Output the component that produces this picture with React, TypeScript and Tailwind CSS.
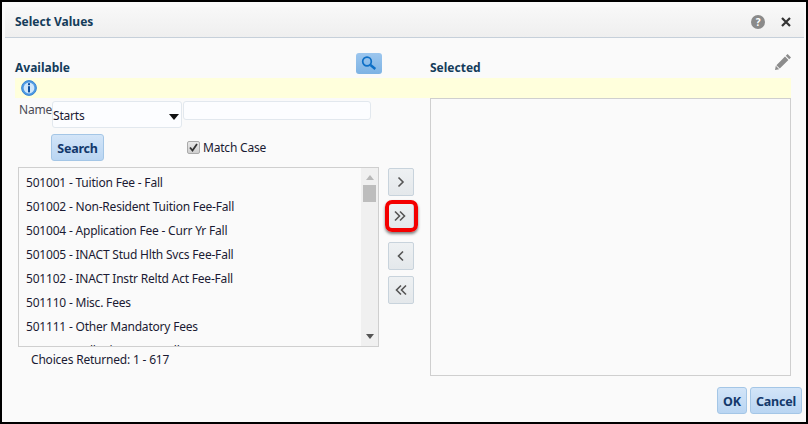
import React from "react";

const items = [
  "501001 - Tuition Fee - Fall",
  "501002 - Non-Resident Tuition Fee-Fall",
  "501004 - Application Fee - Curr Yr Fall",
  "501005 - INACT Stud Hlth Svcs Fee-Fall",
  "501102 - INACT Instr Reltd Act Fee-Fall",
  "501110 - Misc. Fees",
  "501111 - Other Mandatory Fees",
  "501112 - Collegiate Fee - Fall Term",
];

function Chevron({ dir, double }: { dir: "l" | "r"; double?: boolean }) {
  if (dir === "r") {
    return (
      <svg width="18" height="14" viewBox="0 0 18 14" fill="none" stroke="#555" strokeWidth="1.6">
        {double ? (
          <>
            <path d="M3 2.5l4.5 4.5-4.5 4.5" />
            <path d="M8 2.5l4.5 4.5-4.5 4.5" />
          </>
        ) : (
          <path d="M6.5 2.5l4.5 4.5-4.5 4.5" />
        )}
      </svg>
    );
  }
  return (
    <svg width="18" height="14" viewBox="0 0 18 14" fill="none" stroke="#555" strokeWidth="1.6">
      {double ? (
        <>
          <path d="M9 2.5l-4.5 4.5 4.5 4.5" />
          <path d="M14 2.5l-4.5 4.5 4.5 4.5" />
        </>
      ) : (
        <path d="M11 2.5l-4.5 4.5 4.5 4.5" />
      )}
    </svg>
  );
}

function Move({ children }: { children: React.ReactNode }) {
  return (
    <button className="w-[26px] h-[28px] flex items-center justify-center rounded-[2px] border border-[#c8d3dc] bg-gradient-to-b from-[#eef1f3] to-[#e4e8eb]">
      {children}
    </button>
  );
}

function BlueBtn({ label, w }: { label: string; w: string }) {
  return (
    <button className={`${w} h-[27px] pt-[2px] flex items-center justify-center rounded-[3px] border border-[#a4c6e6] bg-gradient-to-b from-[#d3e5f8] to-[#b9d5f2] font-bold text-[12.5px] text-[#13386b]`}>
      {label}
    </button>
  );
}

export default function App() {
  return (
    <div className="font-['Noto_Sans','DejaVu_Sans',sans-serif] w-[808px] h-[424px] bg-black p-[2px] text-[12px] leading-[16px] tracking-[-0.2px] text-[#1a1a33]">
      <div className="w-full h-full bg-[#fafafa] flex flex-col pt-[5px]">
        <div className="h-[31px] shrink-0 ml-[3px] mr-[2px] flex items-center justify-between bg-gradient-to-b from-[#f8f8f8] to-[#efefef] border-b border-[#c6d0da] pl-[10px] pr-[13px]">
          <span className="font-bold text-[12px] tracking-normal text-[#143c5a]">Select Values</span>
          <div className="flex items-center gap-[16px]">
            <span className="w-[14px] h-[14px] rounded-full bg-[#8a8a8a] text-white text-[10px] font-bold flex items-center justify-center">?</span>
            <svg width="10" height="10" viewBox="0 0 10 10" stroke="#333" strokeWidth="2.2"><path d="M1 1l8 8M9 1l-8 8" /></svg>
          </div>
        </div>

        <div className="pl-[13px] pr-[15px]">
          <div className="h-[40px] flex items-start">
            <span className="w-[341px] mt-[22px] font-bold text-[12px] tracking-normal text-[#143c5a]">Available</span>
            <button className="w-[26px] h-[21px] mt-[15px] flex items-center justify-center rounded-[3px] bg-gradient-to-b from-[#9cc6ee] to-[#7db3e4]">
              <svg width="16" height="15" viewBox="0 0 16 15" fill="none" stroke="#0d6fc6"><circle cx="6" cy="5.5" r="4.3" strokeWidth="1.7" /><path d="M9.5 9l4.8 4" strokeWidth="2.4" /></svg>
            </button>
            <span className="ml-[48px] mt-[22px] font-bold text-[12px] tracking-normal text-[#143c5a]">Selected</span>
            <svg className="ml-auto mt-[16px]" width="16" height="16" viewBox="0 0 16 16" fill="#8c8c8c">
              <path d="M12.6 0l3.4 3.4-1.8 1.8-3.4-3.4zM10 2.6l3.4 3.4-8.6 8.6-3.4-3.4zM0.8 11.8l3.4 3.4-4.2 0.8z" />
            </svg>
          </div>

          <div className="h-[20px] bg-[#ffffdc] flex items-center pl-[6px]">
            <svg width="16" height="16" viewBox="0 0 16 16">
              <circle cx="8" cy="8" r="7.4" fill="#4f9be4" stroke="#3a86d2" strokeWidth="1" />
              <circle cx="8" cy="8" r="5.4" fill="#cfe6fb" />
              <rect x="7" y="3.2" width="2" height="2" fill="#0f4f9e" />
              <rect x="7" y="6.2" width="2" height="6.2" fill="#0f4f9e" />
            </svg>
          </div>

          <div className="flex items-start">
            <div className="w-[373px] shrink-0 flex flex-col">
              <div className="flex items-start pt-[3px]">
                <span className="w-[33px] ml-[4px] mt-[1px] text-[#4a4a55]">Name</span>
                <div className="w-[130px] h-[27px] relative flex items-center pt-[3px] rounded-[3px] border border-[#e2e8ee] bg-[#fcfdff]">
                  Starts
                  <svg className="absolute left-[116px] top-[12px]" width="10" height="6" viewBox="0 0 10 6" fill="#111"><path d="M0 0h10L5 6z" /></svg>
                </div>
                <div className="w-[188px] h-[19px] ml-[1px] rounded-[3px] border border-[#e2e8ee] bg-[#fcfdff]" />
              </div>
              <div className="flex items-center mt-[6px] ml-[36px]">
                <BlueBtn label="Search" w="w-[53px]" />
                <span className="w-[13px] h-[13px] ml-[83px] flex items-center justify-center rounded-[2px] border border-[#aaa] bg-gradient-to-b from-[#e8e8e8] to-[#cfcfcf]">
                  <svg width="9" height="9" viewBox="0 0 9 9" fill="none" stroke="#333" strokeWidth="1.8"><path d="M1 4.5l2.5 3L8 1" /></svg>
                </span>
                <span className="ml-[3px]">Match Case</span>
              </div>
              <div className="w-[361px] h-[180px] ml-[3px] mt-[6px] flex border border-[#cfcfcf] bg-[#fafafa] overflow-hidden">
                <div className="flex-1 overflow-hidden pl-[7px] pt-[3px]">
                  {items.map((t) => (
                    <div key={t} className="h-[24px] flex items-center whitespace-nowrap">{t}</div>
                  ))}
                </div>
                <div className="w-[17px] shrink-0 flex flex-col items-center justify-between bg-[#f0f0f0] pt-[7px] pb-[7px]">
                  <div className="flex flex-col items-center">
                    <svg width="8" height="5" viewBox="0 0 8 5" fill="#b8b8b8"><path d="M4 0l4 5H0z" /></svg>
                    <div className="w-[13px] h-[17px] mt-[5px] bg-[#bdbdbd]" />
                  </div>
                  <svg width="8" height="5" viewBox="0 0 8 5" fill="#555"><path d="M0 0h8L4 5z" /></svg>
                </div>
              </div>
              <span className="ml-[16px] mt-[5px]">Choices Returned: 1 - 617</span>
            </div>

            <div className="w-[26px] shrink-0 flex flex-col pt-[70px]">
              <Move><Chevron dir="r" /></Move>
              <div className="relative mt-[6px]">
                <Move><Chevron dir="r" double /></Move>
                <div className="absolute -left-[3px] -right-[4px] -top-[2px] -bottom-[2px] rounded-[7px] border-[4px] border-[#f40000] shadow-[0_2px_3px_rgba(0,0,0,0.5)]" />
              </div>
              <div className="mt-[12px]"><Move><Chevron dir="l" /></Move></div>
              <div className="mt-[6px]"><Move><Chevron dir="l" double /></Move></div>
            </div>

            <div className="ml-[16px] flex-1 h-[278px] border border-[#cfcfcf] bg-[#fafafa]" />
          </div>
        </div>

        <div className="flex justify-end gap-[3px] pr-[4px] mt-[11px]">
          <BlueBtn label="OK" w="w-[30px]" />
          <BlueBtn label="Cancel" w="w-[52px]" />
        </div>
      </div>
    </div>
  );
}
